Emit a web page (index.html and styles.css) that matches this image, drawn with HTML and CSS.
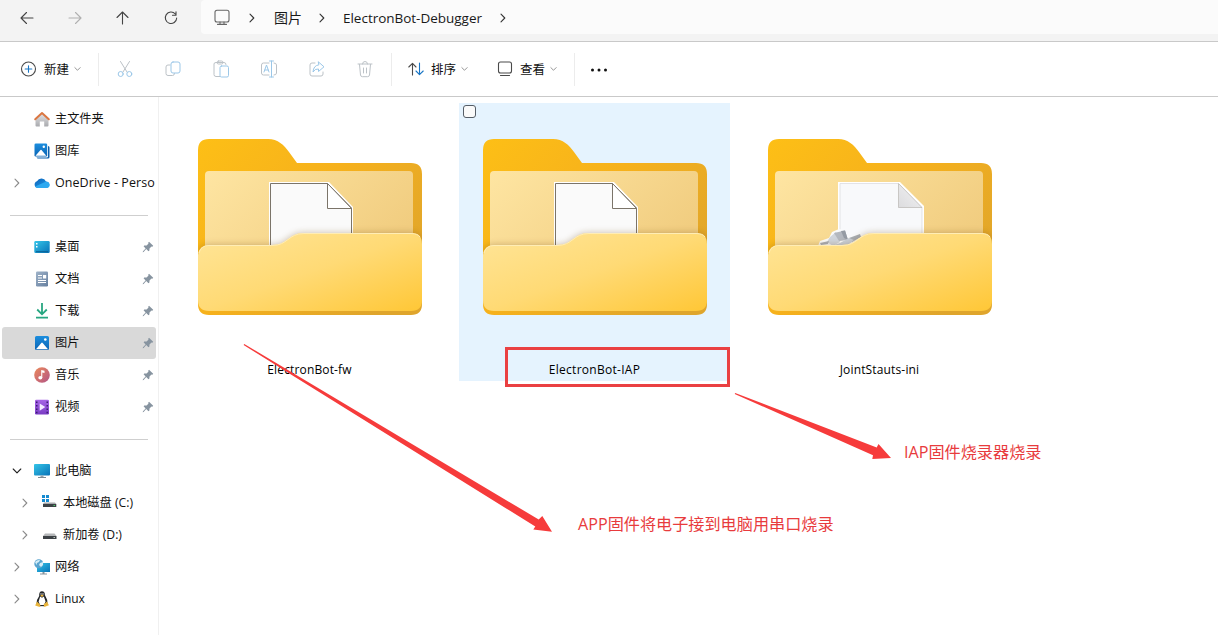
FILE: index.html
```html
<!DOCTYPE html>
<html lang="zh-CN">
<head>
<meta charset="utf-8">
<title>ElectronBot-Debugger</title>
<link rel="stylesheet" href="styles.css">
</head>
<body>
<svg class="defs" width="0" height="0" aria-hidden="true">
  <defs>
    <linearGradient id="gBack" x1="0" y1="0" x2="1" y2="0.7"><stop offset="0" stop-color="#fdbf16"/><stop offset=".5" stop-color="#f6b11c"/><stop offset="1" stop-color="#dfa52c"/></linearGradient>
    <linearGradient id="gInner" x1="0" y1="0" x2="1" y2="0.5"><stop offset="0" stop-color="#fee5a2"/><stop offset="1" stop-color="#f1cd80"/></linearGradient>
    <linearGradient id="gFront" x1="0" y1="0" x2="1" y2="1"><stop offset="0" stop-color="#ffe598"/><stop offset=".5" stop-color="#ffda75"/><stop offset="1" stop-color="#ffc736"/></linearGradient>
    <linearGradient id="gScreen" x1="0" y1="0" x2="1" y2="1"><stop offset="0" stop-color="#35c5e8"/><stop offset="1" stop-color="#0873b8"/></linearGradient>
    <linearGradient id="gPic" x1="0" y1="0" x2="0" y2="1"><stop offset="0" stop-color="#1c8ede"/><stop offset="1" stop-color="#0a64b4"/></linearGradient>
    <linearGradient id="gMusic" x1="0" y1="0" x2="1" y2="1"><stop offset="0" stop-color="#ec8a5a"/><stop offset="1" stop-color="#b25486"/></linearGradient>
    <linearGradient id="gVideo" x1="0" y1="0" x2="0" y2="1"><stop offset="0" stop-color="#a765e6"/><stop offset="1" stop-color="#7a3cc4"/></linearGradient>
    <linearGradient id="gDoc" x1="0" y1="0" x2="1" y2="1"><stop offset="0" stop-color="#9fb3c9"/><stop offset="1" stop-color="#667f9f"/></linearGradient>
    <linearGradient id="gHome" x1="0" y1="0" x2="0" y2="1"><stop offset="0" stop-color="#e2e2e4"/><stop offset="1" stop-color="#a9aaae"/></linearGradient>
    <linearGradient id="gCloud" x1="0" y1="0" x2="1" y2="1"><stop offset="0" stop-color="#0a60b8"/><stop offset="1" stop-color="#27a4ee"/></linearGradient>
    <linearGradient id="gFold" x1="0" y1="1" x2="1" y2="0"><stop offset="0" stop-color="#dcdcde"/><stop offset="1" stop-color="#f4f4f5"/></linearGradient>
    <filter id="soft" x="-10%" y="-30%" width="120%" height="160%"><feGaussianBlur stdDeviation="3.5"/></filter>
    <clipPath id="clipBack"><path d="M0 11Q0 0 11 0H70C81 0 87 6 92 14L99 24H213Q224 24 224 35V165Q224 176 213 176H11Q0 176 0 165Z"/></clipPath>
    <symbol id="folderBack" viewBox="0 0 224 176">
      <path fill="url(#gBack)" d="M0 11Q0 0 11 0H70C80 0 86 6 91 13L99 24H213Q224 24 224 35V165Q224 176 213 176H11Q0 176 0 165Z"/>
      <path fill="url(#gInner)" d="M7 36q0-4 4-4H211q4 0 4 4V130H7Z"/>
    </symbol>
    <symbol id="folderFront" viewBox="0 0 224 176">
      <g clip-path="url(#clipBack)"><path filter="url(#soft)" fill="#6e4a16" opacity=".34" d="M0 115Q1 106 11 106H74C90 106 90 94 106 94H214Q223 94 224 103V140H0Z"/></g>
      <path fill="url(#gFront)" d="M0 116Q1 106 11 106H74C90 106 90 94 106 94H213Q224 94 224 105V161Q224 172 213 172H11Q0 172 0 161Z"/>
      <path fill="none" stroke="#ffedb5" d="M1 114Q3 106.500 11 106.500H74C90 106.500 90 94.500 106 94.500H213Q220 94.500 222 98"/>
    </symbol>
    <symbol id="paper" viewBox="0 0 224 176">
      <path fill="#fff" d="M71 43H131L155 68V130H71Z"/>
      <path fill="#fafafa" stroke="#7b7469" d="M72.500 125V44.500H129.500L153.500 69V125"/>
      <path fill="#fff" stroke="#7b7469" d="M129.500 44.500V69.500H153.500Z"/>
    </symbol>
    <symbol id="iniPaper" viewBox="0 0 224 176">
      <path fill="#fff" d="M70 43H132L156 67V130H70Z"/>
      <path fill="#f8f9fb" stroke="#d8d9dc" stroke-width=".7" d="M72 125V44.500H130L154 69V125"/>
      <path fill="url(#gFold)" stroke="#b9b6b2" stroke-width=".7" d="M130.500 44.500V68.500H154Z"/>
      <path fill="#fafbfc" d="M50 107L52 102 61 99 64 93 71 90 77 91 81 97 92 94 97 97 91 108Z"/>
      <path fill="#d0d5dc" d="M62 98L68 93 72 103 65 107 59 103Z"/>
      <path fill="#b4b8bf" d="M66 94L77 91.500 80 101 71 102Z"/><path fill="#959ba4" d="M73 92L77 91.500 80 101 76 99Z"/>
      <path fill="#a9aeb5" d="M52 104L61 102 60 105 53 106ZM81 99L92 95 93 98 84 103Z"/><path fill="#c9d0d9" d="M72 104L81 99 86 101 80 106H66Z"/>
    </symbol>
    <symbol id="right" viewBox="0 0 8 10"><path class="line" d="M2 1.200L5.800 5 2 8.800"/></symbol>
    <symbol id="down" viewBox="0 0 10 8"><path class="line" d="M1.200 2L5 5.800 8.800 2"/></symbol>
    <symbol id="pin" viewBox="0 0 12 12"><path fill="#8794a0" d="M7 .8L11.200 4.800 10.400 5.700 9.500 5.500 7.500 7.400 7.400 9.600 6.500 10.200 4.200 8 1.600 10.900.7 11.200 1 10.200 3.600 7.400 1.600 5.300 2.200 4.400 4.600 4.400 6.500 2.500 6.200 1.700Z"/></symbol>
    <symbol id="pc" viewBox="0 0 18 16"><rect x="1" y="1" width="16" height="11.500" rx="1" fill="url(#gScreen)"/><path fill="#98a4ad" d="M7.500 12.500h3V14h-3Z"/><path fill="#7f8b94" d="M5 14h8v1H5Z"/></symbol>
    <symbol id="picture" viewBox="0 0 16 16"><rect x="1" y="1" width="14" height="14" rx="1.500" fill="url(#gPic)"/><path fill="#fff" d="M2 14.200L7.300 8q.7-.8 1.400 0L14 14.200Z"/><circle cx="11.300" cy="4.500" r="1.300" fill="#fff"/></symbol>
  </defs>
</svg>
<div class="window">
  <header class="nav">
    <div class="nav-buttons">
      <svg class="ic16" viewBox="0 0 16 16"><path class="line" d="M14 8H2.500M7.500 2.500L2 8l5.500 5.500"/></svg>
      <svg class="ic16 faint" viewBox="0 0 16 16"><path class="line" d="M2 8H13.500M8.500 2.500L14 8l-5.500 5.500"/></svg>
      <svg class="ic16" viewBox="0 0 16 16"><path class="line" d="M7.500 14V2.500M2 7.500L7.500 2l5.500 5.500"/></svg>
      <svg class="ic16" viewBox="0 0 16 16"><path class="line" d="M12.300 4A5.700 5.700 0 1 0 13.700 8M13 1.800V5.200H9.500"/></svg>
    </div>
    <div class="address">
      <svg class="monitor" viewBox="0 0 16 16"><rect x="1" y=".2" width="14" height="11.800" rx="2" class="line"/><path class="line" d="M6 12v2.300M10 12v2.300M3.500 14.400h9"/></svg>
      <svg class="chev c1"><use href="#right"/></svg>
      <span class="crumb pic">图片</span>
      <svg class="chev c2"><use href="#right"/></svg>
      <span class="crumb name">ElectronBot-Debugger</span>
      <svg class="chev c3"><use href="#right"/></svg>
    </div>
  </header>
  <div class="toolbar">
    <div class="tool new">
      <svg class="ic16" viewBox="0 0 16 16"><circle cx="8.500" cy="8" r="7" class="line"/><path class="line blue" d="M8.500 4.700v6.600M5.200 8h6.600"/></svg>
      <span>新建</span><svg class="drop"><use href="#down"/></svg>
    </div>
    <i class="sep"></i>
    <div class="actions">
      <svg viewBox="0 0 18 18"><path class="gray" d="M4.500 1.500L11 12M13.500 1.500L7 12"/><circle class="sky" cx="4.700" cy="14" r="2.500"/><circle class="sky" cx="13.300" cy="14" r="2.500"/></svg>
      <svg viewBox="0 0 18 18"><path class="gray" d="M6 5H4Q2 5 2 7v6.500q0 2 2 2h4.500q2 0 2-2"/><rect class="sky" x="7" y="2" width="9" height="11" rx="2"/></svg>
      <svg viewBox="0 0 18 18"><path class="gray" d="M8 16.500H4q-2 0-2-2V4q0-1.500 2-1.500h8q2 0 2 2"/><rect class="gray" x="5" y="1" width="6" height="3" rx="1.500"/><rect class="sky" x="8" y="6" width="8.500" height="11" rx="1.500"/></svg>
      <svg viewBox="0 0 18 18"><path class="gray" d="M9 3H3.500Q1.500 3 1.500 5v8q0 2 2 2H9M14 3q2.500 0 2.500 2v8q0 2-2.500 2"/><path class="sky" d="M11.500 1v16M9.500 1h4M9.500 17h4M4 12l2.500-7L9 12M5 10h3"/></svg>
      <svg viewBox="0 0 18 18"><path class="gray" d="M7 3H4Q2 3 2 5v9q0 2 2 2h9q2 0 2-2v-2"/><path class="sky" d="M10.500 2L16 6.800l-5.500 4.700V9Q7 8.500 5 12 5.500 5.500 10.500 4.900Z"/></svg>
      <svg viewBox="0 0 18 18"><path class="gray" d="M2 4h14M6.500 4q0-2.500 2.500-2.500T11.500 4M3.500 4.500l1 10.500q.2 1.700 2 1.700h5q1.800 0 2-1.700l1-10.500M7.500 8v5M10.500 8v5"/></svg>
    </div>
    <i class="sep"></i>
    <div class="tool sort">
      <svg viewBox="0 0 16 16"><path class="line" d="M4.500 14V2.500M.8 6l3.700-3.700L8 6"/><path class="line blue" d="M11.500 2v11.500M8 10l3.500 3.700L15.200 10"/></svg>
      <span>排序</span><svg class="drop"><use href="#down"/></svg>
    </div>
    <div class="tool view">
      <svg viewBox="0 0 16 16"><rect class="line" x="1.500" y="1" width="13" height="11" rx="2"/><path class="line" d="M3.500 14.500h9"/></svg>
      <span>查看</span><svg class="drop"><use href="#down"/></svg>
    </div>
    <i class="sep"></i>
    <svg class="more" viewBox="0 0 18 4"><circle cx="2.500" cy="2" r="1.500"/><circle cx="9" cy="2" r="1.500"/><circle cx="15.500" cy="2" r="1.500"/></svg>
  </div>
  <div class="main">
    <nav class="side">
      <div class="row"><i class="exp"></i><svg class="ico" viewBox="0 0 16 16"><path fill="url(#gHome)" d="M1.500 8L8 2.500 14.500 8v6.500q0 1-1 1H10.200V10.500H5.800v5H2.500q-1 0-1-1Z"/><path fill="none" stroke="#db7742" stroke-width="2" stroke-linecap="round" stroke-linejoin="round" d="M1.200 8.300L8 2l6.800 6.300"/></svg><span>主文件夹</span></div>
      <div class="row"><i class="exp"></i><svg class="ico" viewBox="0 0 16 16"><path fill="#0b60ad" d="M14 3q1.500 0 1.500 1.500V14q0 1.500-1.500 1.500H4q-1 0-1.500-1H13q1 0 1-1Z"/><rect x=".5" y=".5" width="12.700" height="13" rx="1.300" fill="url(#gPic)"/><path fill="#fff" d="M1.500 12.800L6.500 7q.5-.5 1 0l4.800 5.800Z"/><circle cx="9.800" cy="3.800" r="1.200" fill="#fff"/></svg><span>图库</span></div>
      <div class="row"><svg class="exp"><use href="#right"/></svg><svg class="ico" viewBox="0 0 16 16"><path fill="url(#gCloud)" d="M3.800 13A3.500 3.500 0 0 1 3 6.200 5 5 0 0 1 12 6.500 3.300 3.300 0 0 1 12.800 13Z"/><path fill="#2ea9f0" d="M3.800 13Q2 13 1.200 11.600L10 7.500Q13 5.800 15 7.700 16.200 9.500 15.500 11.200 14.500 13 12.800 13Z"/></svg><span class="latin one">OneDrive - Perso</span></div>
      <div class="divider"></div>
      <div class="row"><i class="exp"></i><svg class="ico" viewBox="0 0 16 16"><rect x=".3" y="2" width="15.400" height="12" rx="1.200" fill="url(#gScreen)"/><path fill="#fff" d="M2 4h1.500v1.500H2ZM2 7h1.500v1.500H2Z"/><path fill="#075c91" d="M2 12.300h12v1H2Z"/></svg><span>桌面</span><svg class="pin"><use href="#pin"/></svg></div>
      <div class="row"><i class="exp"></i><svg class="ico" viewBox="0 0 16 16"><rect x="2" y=".5" width="12" height="15" rx="1.200" fill="url(#gDoc)"/><path stroke="#fff" d="M4 4.500h4M4 7h4M4 9.500h8M4 11.500h8"/><path fill="#fff" d="M9 4h3.200v3.500H9Z"/></svg><span>文档</span><svg class="pin"><use href="#pin"/></svg></div>
      <div class="row"><i class="exp"></i><svg class="ico" viewBox="0 0 16 16"><path fill="none" stroke="#27a681" stroke-width="1.800" d="M8 0v11M3.200 6.500L8 11.300l4.800-4.800M2 14.700h12"/></svg><span>下载</span><svg class="pin"><use href="#pin"/></svg></div>
      <div class="row selected"><i class="exp"></i><svg class="ico"><use href="#picture"/></svg><span>图片</span><svg class="pin"><use href="#pin"/></svg></div>
      <div class="row"><i class="exp"></i><svg class="ico" viewBox="0 0 16 16"><circle cx="8" cy="8" r="7.800" fill="url(#gMusic)"/><ellipse cx="6.300" cy="10.800" rx="2" ry="1.700" fill="#fff"/><path fill="#fff" d="M7.200 3L10.500 3.800V6L8.300 5.400V11H7.200Z"/></svg><span>音乐</span><svg class="pin"><use href="#pin"/></svg></div>
      <div class="row"><i class="exp"></i><svg class="ico" viewBox="0 0 16 16"><rect x="1" y=".7" width="14" height="14.800" rx="1.300" fill="url(#gVideo)"/><path fill="#3a1c70" d="M2 2.500h1.500v1.500H2ZM2 6h1.500v1.500H2ZM2 9.500h1.500V11H2ZM2 12.700h1.500v1.500H2ZM12.500 2.500H14v1.500h-1.500ZM12.500 6H14v1.500h-1.500ZM12.500 9.500H14V11h-1.500ZM12.500 12.700H14v1.500h-1.500Z"/><path fill="#f3e9ff" d="M5.700 4.500L11.300 8l-5.600 3.700Z"/></svg><span>视频</span><svg class="pin"><use href="#pin"/></svg></div>
      <div class="divider"></div>
      <div class="row"><svg class="exp open"><use href="#down"/></svg><svg class="ico" viewBox="1 0 16 16"><use href="#pc" width="18" height="16"/></svg><span>此电脑</span></div>
      <div class="row sub"><svg class="exp"><use href="#right"/></svg><svg class="ico" viewBox="1 1 16 16"><path fill="#168bd1" d="M1 1h3v3H1ZM5 1h3v3H5ZM1 5h3v3H1ZM5 5h3v3H5Z"/><path fill="#a8abae" d="M3 8.500H14L15.300 10H2Z"/><path fill="#3d4246" d="M2 10h13.300v3H2Z"/><path fill="#46cf62" d="M12.500 11h1.500v1h-1.500Z"/></svg><span>本地磁盘 (C:)</span></div>
      <div class="row sub"><svg class="exp"><use href="#right"/></svg><svg class="ico" viewBox="1 0 16 16"><path fill="#b5b7b9" d="M4 6.500H13.500L15.500 9H2Z"/><path fill="#3d4246" d="M2 9h13.500v3H2Z"/><path fill="#b5c0b7" d="M12.500 10H14v1h-1.500Z"/></svg><span>新加卷 (D:)</span></div>
      <div class="row"><svg class="exp"><use href="#right"/></svg><svg class="ico" viewBox="0 0 16 16"><path fill="url(#gScreen)" d="M3 4H16V13H3Z"/><path fill="#87949d" d="M8.500 13h2v1.500H13v1H6v-1h2.500Z"/><circle cx="4.800" cy="4.800" r="4.500" fill="#5aa4cf"/><path fill="#d4edf7" d="M1 3Q3 .5 6 1L5 3 3 4 2.500 6ZM6 4l3-1v3L7 8 5 6Z"/></svg><span>网络</span></div>
      <div class="row"><svg class="exp"><use href="#right"/></svg><svg class="ico" viewBox="0 0 16 16"><path fill="#25282b" d="M8 .3Q11 .3 10.900 4L13.200 9 13.500 13Q11 16 8 15 5 16 2.500 13L3 9 5.200 5Q4.800.3 8 .3Z"/><path fill="#fff" d="M6.200 5.500L8 6.700 9.800 5.500 11.600 10.500 10 14H6L4.600 10.500Z"/><path fill="#e9b43a" d="M6.300 4.500L8 3.500 9.700 4.500 8 6ZM3 10.500L6.500 14 5.700 16 1.200 14.500ZM13 10.500L9.600 13.500 10.300 16 14.900 14.300Z"/><circle cx="7" cy="2.900" r=".7" fill="#fff"/><circle cx="9" cy="2.900" r=".7" fill="#fff"/></svg><span class="latin linux">Linux</span></div>
    </nav>
    <section class="files">
      <article class="tile"><svg class="folder" viewBox="0 0 224 176"><use href="#folderBack"/><use href="#paper"/><use href="#folderFront"/></svg><span class="label fw">ElectronBot-fw</span></article>
      <article class="tile hover"><i class="check"></i><svg class="folder" viewBox="0 0 224 176"><use href="#folderBack"/><use href="#paper"/><use href="#folderFront"/></svg><span class="label iap">ElectronBot-IAP</span></article>
      <article class="tile"><svg class="folder" viewBox="0 0 224 176"><use href="#folderBack"/><use href="#iniPaper"/><use href="#folderFront"/></svg><span class="label ini">JointStauts-ini</span></article>
    </section>
  </div>
  <svg class="arrows" viewBox="0 0 1218 635"><path d="M244.300 344L538.700 519.500 542.300 516 552 531.800 533.300 529.500 535.300 526.600 243.600 345ZM735.200 393L876.700 447.500 878.500 444 891 458 872.300 459 873 455.300 734.700 394Z"/></svg>
  <div class="mark"></div>
  <div class="note note-iap">IAP固件烧录器烧录</div>
  <div class="note note-app">APP固件将电子接到电脑用串口烧录</div>
</div>
</body>
</html>
```
FILE: styles.css
```css
* { box-sizing: border-box; }
body { margin: 0; background: #fff; color: #111; font: 12px/16px "Open Sans", "Noto Sans CJK SC", sans-serif; }
.defs { position: absolute; }
svg { display: block; flex: none; overflow: visible; }
.window { position: relative; width: 1218px; height: 635px; overflow: hidden; display: flex; flex-direction: column; }
.line { fill: none; stroke: currentColor; stroke-width: 1.1; stroke-linecap: round; stroke-linejoin: round; }
.blue { stroke: #1976c5; }

.nav { height: 42px; flex: none; display: flex; background: #f3f3f3; border-bottom: 1px solid #c9c9c9; color: #444; }
.nav-buttons { width: 201px; display: flex; gap: 32px; padding: 10px 0 0 19px; }
.ic16 { width: 16px; height: 16px; }
.faint { color: #b0b0b0; }
.address { flex: 1; height: 34px; background: #fbfbfb; border-radius: 4px 0 0 4px; display: flex; align-items: center; padding: 2px 0 0 13px; }
.monitor { width: 16px; height: 16px; color: #666; }
.chev { width: 8px; height: 10px; color: #333; }
.c1 { margin-left: 18px; }
.c2 { margin-left: 16px; }
.c3 { margin-left: 17px; }
.crumb { color: #191919; font-size: 14px; line-height: 20px; white-space: nowrap; }
.pic { width: 28px; margin-left: 18px; }
.name { width: 139px; margin-left: 17px; font-size: 13.5px; letter-spacing: -0.02px; }

.toolbar { height: 55px; flex: none; display: flex; align-items: center; border-bottom: 1px solid #c9c9c9; }
.tool { display: flex; align-items: center; color: #4a4a4a; }
.tool span { width: 25px; margin-left: 8px; padding-top: 1px; color: #111; font-size: 12.5px; white-space: nowrap; }
.tool > svg:first-child { width: 16px; height: 16px; }
.drop { width: 7px; height: 6px; margin-left: 5px; color: #777; }
.new { width: 98px; padding-left: 20px; }
.sep { width: 1px; height: 33px; background: #ececec; }
.actions { width: 292px; display: flex; gap: 30px; padding-left: 17px; }
.actions svg { width: 18px; height: 18px; }
.gray, .sky { fill: none; stroke: #bcc2c7; stroke-linecap: round; stroke-linejoin: round; }
.sky { stroke: #9bc7e8; }
.sort { width: 89px; padding-left: 16px; }
.view { width: 93px; padding-left: 16px; }
.sort span, .view span { margin-left: 7px; }
.more { width: 18px; height: 4px; margin: 2px 0 0 15px; fill: #111; }

.main { flex: 1; display: flex; min-height: 0; }
.side { width: 159px; flex: none; padding: 6px 2px 0; border-right: 1px solid #f0f0f0; }
.row { height: 32px; display: flex; align-items: center; border-radius: 3px; white-space: nowrap; overflow: hidden; color: #111; }
.row > span { width: 93px; margin-left: 5px; font-size: 12.2px; }
.exp { width: 8px; height: 10px; margin: 0 13px 0 11px; color: #8a8a8a; flex: none; }
.exp .line { stroke-width: 1.4; }
.exp.open { width: 10px; height: 8px; margin: 0 12px 0 10px; color: #222; stroke-width: 1.5; }
.ico { width: 16px; height: 16px; }
.row > .latin { width: 101px; font-size: 12.5px; }
.row > .one { letter-spacing: 0.07px; }
.row > .linux { font-size: 12px; letter-spacing: -0.1px; }
.row > .pin { width: 12px; height: 12px; margin-left: -6px; }
.selected { background: #d9d9d9; width: 154px; }
.sub { padding-left: 8px; }
.divider { height: 32px; margin-left: 8px; width: 138px; padding-top: 16px; }
.divider::before { content: ""; display: block; height: 1px; background: #cfcfcf; }

.files { flex: 1; display: flex; gap: 14px; padding: 6px 0 0 15px; }
.tile { width: 271px; height: 278px; flex: none; position: relative; display: flex; flex-direction: column; align-items: center; padding-top: 36px; }
.hover { background: #e5f3fe; }
.check { position: absolute; left: 4px; top: 2px; width: 13px; height: 13px; background: #fafafa; border: 1px solid #555d66; border-radius: 3px; }
.folder { width: 224px; height: 176px; margin-left: 1px; }
.label { margin-top: 46px; line-height: 18px; font-size: 12px; color: #000; white-space: nowrap; }
.fw { letter-spacing: 0.15px; }
.iap { letter-spacing: 0.27px; }
.ini { letter-spacing: 0.15px; }
.arrows { position: absolute; left: 0; top: 0; width: 1218px; height: 635px; fill: #f63b3b; }
.mark { position: absolute; left: 505px; top: 347px; width: 225px; height: 40px; border: 3px solid #ea4042; }
.note { position: absolute; color: #e83b3d; font-size: 16.15px; line-height: 22px; white-space: nowrap; }
.note-iap { left: 904px; top: 441px; }
.note-app { left: 578px; top: 513px; }
```
